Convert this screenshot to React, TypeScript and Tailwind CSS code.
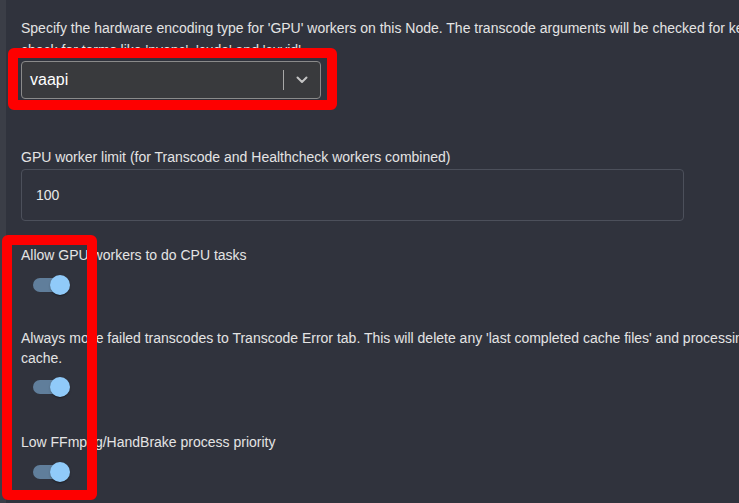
import React from 'react';

function Toggle() {
  return (
    <div className="relative h-[38px] w-[58px]">
      <div className="absolute left-[12px] top-[12px] h-[14px] w-[34px] rounded-full bg-[#90caf9] opacity-50" />
      <div className="absolute left-[29px] top-[9px] h-[20px] w-[20px] rounded-full bg-[#90caf9] shadow-[0_2px_1px_-1px_rgba(0,0,0,0.2),0_1px_1px_0_rgba(0,0,0,0.14),0_1px_3px_0_rgba(0,0,0,0.12)]" />
    </div>
  );
}

export default function App() {
  return (
    <div
      className="relative flex h-[503px] w-[739px] overflow-hidden bg-[#30333d] text-[14px] leading-[22px] text-[#e4e4e4]"
      style={{ fontFamily: '"Liberation Sans", Arial, sans-serif' }}
    >
      <div className="w-[6px] shrink-0 bg-[#3b3e47]" />
      <div className="flex-1 pl-[15px] pt-[17px]">
        <p className="whitespace-nowrap">
          Specify the hardware encoding type for 'GPU' workers on this Node. The transcode arguments will be checked for keywords to
          <br />
          check for terms like 'nvenc', 'cuda' and 'cuvid'
        </p>

        <div className="flex h-[38px] w-[300px] items-center rounded-[4px] border border-[#8a8a8a] bg-[#393a3d]">
          <span className="flex-1 pl-[8px] text-[16px] text-white">vaapi</span>
          <span className="h-[20px] w-px bg-[#a8a8a8]" />
          <span className="flex w-[36px] items-center justify-center">
            <svg width="12" height="8" viewBox="0 0 12 8" fill="none">
              <path d="M1.5 1.5 L6 6 L10.5 1.5" stroke="#c4c4c4" strokeWidth="2" strokeLinecap="round" strokeLinejoin="round" />
            </svg>
          </span>
        </div>

        <p className="mt-[47px] whitespace-nowrap">GPU worker limit (for Transcode and Healthcheck workers combined)</p>
        <div className="mt-px flex h-[52px] w-[663px] items-center rounded-[4px] border border-[#4c505b] pl-[14px] text-[14px] text-[#e8e8e8]">
          100
        </div>

        <p className="mt-[23px] whitespace-nowrap">Allow GPU workers to do CPU tasks</p>
        <Toggle />

        <p className="mt-[24px] whitespace-nowrap leading-[20px]">
          Always move failed transcodes to Transcode Error tab. This will delete any 'last completed cache files' and processing files in
          <br />
          cache.
        </p>
        <Toggle />

        <p className="mt-[25px] whitespace-nowrap">Low FFmpeg/HandBrake process priority</p>
        <Toggle />
      </div>

      <div className="absolute left-[8px] top-[48px] h-[62px] w-[329px] rounded-[6px] border-[10px] border-[#fe0000]" />
      <div className="absolute left-[2px] top-[235px] h-[265px] w-[95px] rounded-[6px] border-[10px] border-[#fe0000]" />
    </div>
  );
}
